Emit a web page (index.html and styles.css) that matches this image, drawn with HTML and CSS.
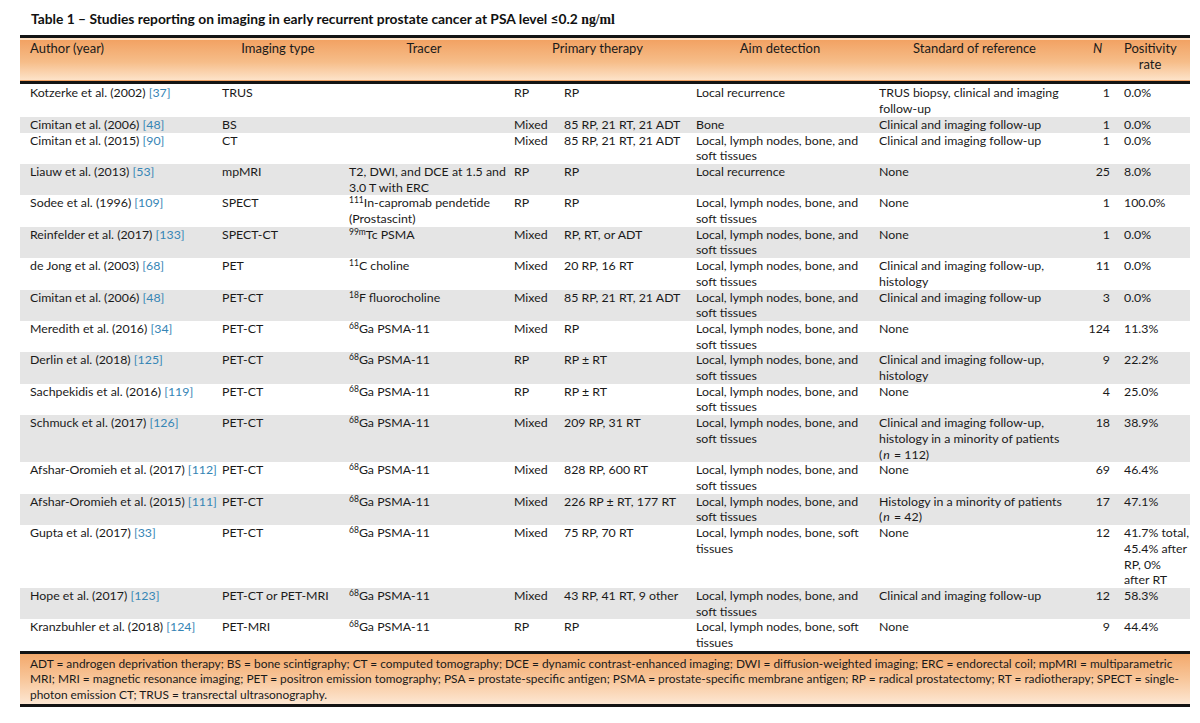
FILE: index.html
```html
<!DOCTYPE html>
<html lang="en">
<head>
<meta charset="utf-8">
<title>Table 1</title>
<link rel="stylesheet" href="styles.css">
</head>
<body>
<div class="page">
  <h1 class="title">Table 1 – Studies reporting on imaging in early recurrent prostate cancer at PSA level ≤0.2 <span class="unit">ng/ml</span></h1>
  <table class="data">
    <colgroup>
      <col class="c-author"><col class="c-img"><col class="c-tracer"><col class="c-ptype"><col class="c-pdet"><col class="c-aim"><col class="c-std"><col class="c-n"><col class="c-pos">
    </colgroup>
    <thead>
      <tr>
        <th class="left">Author (year)</th>
        <th>Imaging type</th>
        <th>Tracer</th>
        <th colspan="2">Primary therapy</th>
        <th>Aim detection</th>
        <th>Standard of reference</th>
        <th class="num"><i>N</i></th>
        <th class="pos">Positivity rate</th>
      </tr>
    </thead>
    <tbody>
      <tr><td>Kotzerke et al. (2002) <a class="ref">[37]</a></td><td>TRUS</td><td class="tr"></td><td>RP</td><td>RP</td><td>Local recurrence</td><td>TRUS biopsy, clinical and imaging follow-up</td><td class="num">1</td><td>0.0%</td></tr>
      <tr><td>Cimitan et al. (2006) <a class="ref">[48]</a></td><td>BS</td><td class="tr"></td><td>Mixed</td><td>85 RP, 21 RT, 21 ADT</td><td>Bone</td><td>Clinical and imaging follow-up</td><td class="num">1</td><td>0.0%</td></tr>
      <tr><td>Cimitan et al. (2015) <a class="ref">[90]</a></td><td>CT</td><td class="tr"></td><td>Mixed</td><td>85 RP, 21 RT, 21 ADT</td><td>Local, lymph nodes, bone, and soft tissues</td><td>Clinical and imaging follow-up</td><td class="num">1</td><td>0.0%</td></tr>
      <tr><td>Liauw et al. (2013) <a class="ref">[53]</a></td><td>mpMRI</td><td class="tr">T2, DWI, and DCE at 1.5 and 3.0 T with ERC</td><td>RP</td><td>RP</td><td>Local recurrence</td><td>None</td><td class="num">25</td><td>8.0%</td></tr>
      <tr><td>Sodee et al. (1996) <a class="ref">[109]</a></td><td>SPECT</td><td class="tr"><sup>111</sup>In-capromab pendetide (Prostascint)</td><td>RP</td><td>RP</td><td>Local, lymph nodes, bone, and soft tissues</td><td>None</td><td class="num">1</td><td>100.0%</td></tr>
      <tr><td>Reinfelder et al. (2017) <a class="ref">[133]</a></td><td>SPECT-CT</td><td class="tr"><sup>99m</sup>Tc PSMA</td><td>Mixed</td><td>RP, RT, or ADT</td><td>Local, lymph nodes, bone, and soft tissues</td><td>None</td><td class="num">1</td><td>0.0%</td></tr>
      <tr><td>de Jong et al. (2003) <a class="ref">[68]</a></td><td>PET</td><td class="tr"><sup>11</sup>C choline</td><td>Mixed</td><td>20 RP, 16 RT</td><td>Local, lymph nodes, bone, and soft tissues</td><td>Clinical and imaging follow-up, histology</td><td class="num">11</td><td>0.0%</td></tr>
      <tr><td>Cimitan et al. (2006) <a class="ref">[48]</a></td><td>PET-CT</td><td class="tr"><sup>18</sup>F fluorocholine</td><td>Mixed</td><td>85 RP, 21 RT, 21 ADT</td><td>Local, lymph nodes, bone, and soft tissues</td><td>Clinical and imaging follow-up</td><td class="num">3</td><td>0.0%</td></tr>
      <tr><td>Meredith et al. (2016) <a class="ref">[34]</a></td><td>PET-CT</td><td class="tr"><sup>68</sup>Ga PSMA-11</td><td>Mixed</td><td>RP</td><td>Local, lymph nodes, bone, and soft tissues</td><td>None</td><td class="num">124</td><td>11.3%</td></tr>
      <tr><td>Derlin et al. (2018) <a class="ref">[125]</a></td><td>PET-CT</td><td class="tr"><sup>68</sup>Ga PSMA-11</td><td>RP</td><td>RP ± RT</td><td>Local, lymph nodes, bone, and soft tissues</td><td>Clinical and imaging follow-up, histology</td><td class="num">9</td><td>22.2%</td></tr>
      <tr><td>Sachpekidis et al. (2016) <a class="ref">[119]</a></td><td>PET-CT</td><td class="tr"><sup>68</sup>Ga PSMA-11</td><td>RP</td><td>RP ± RT</td><td>Local, lymph nodes, bone, and soft tissues</td><td>None</td><td class="num">4</td><td>25.0%</td></tr>
      <tr><td>Schmuck et al. (2017) <a class="ref">[126]</a></td><td>PET-CT</td><td class="tr"><sup>68</sup>Ga PSMA-11</td><td>Mixed</td><td>209 RP, 31 RT</td><td>Local, lymph nodes, bone, and soft tissues</td><td>Clinical and imaging follow-up, histology in a minority of patients <span class="nw">(<i class="it">n</i> = 112)</span></td><td class="num">18</td><td>38.9%</td></tr>
      <tr><td>Afshar-Oromieh et al. (2017) <a class="ref">[112]</a></td><td>PET-CT</td><td class="tr"><sup>68</sup>Ga PSMA-11</td><td>Mixed</td><td>828 RP, 600 RT</td><td>Local, lymph nodes, bone, and soft tissues</td><td>None</td><td class="num">69</td><td>46.4%</td></tr>
      <tr><td>Afshar-Oromieh et al. (2015) <a class="ref">[111]</a></td><td>PET-CT</td><td class="tr"><sup>68</sup>Ga PSMA-11</td><td>Mixed</td><td>226 RP ± RT, 177 RT</td><td>Local, lymph nodes, bone, and soft tissues</td><td>Histology in a minority of patients <span class="nw">(<i class="it">n</i> = 42)</span></td><td class="num">17</td><td>47.1%</td></tr>
      <tr><td>Gupta et al. (2017) <a class="ref">[33]</a></td><td>PET-CT</td><td class="tr"><sup>68</sup>Ga PSMA-11</td><td>Mixed</td><td>75 RP, 70 RT</td><td>Local, lymph nodes, bone, soft tissues</td><td>None</td><td class="num">12</td><td class="multi">41.7% total,<br>45.4% after<br>RP, 0%<br>after RT</td></tr>
      <tr><td>Hope et al. (2017) <a class="ref">[123]</a></td><td>PET-CT or PET-MRI</td><td class="tr"><sup>68</sup>Ga PSMA-11</td><td>Mixed</td><td>43 RP, 41 RT, 9 other</td><td>Local, lymph nodes, bone, and soft tissues</td><td>Clinical and imaging follow-up</td><td class="num">12</td><td>58.3%</td></tr>
      <tr><td>Kranzbuhler et al. (2018) <a class="ref">[124]</a></td><td>PET-MRI</td><td class="tr"><sup>68</sup>Ga PSMA-11</td><td>RP</td><td>RP</td><td>Local, lymph nodes, bone, soft tissues</td><td>None</td><td class="num">9</td><td>44.4%</td></tr>
    </tbody>
  </table>
  <div class="notes">ADT = androgen deprivation therapy; BS = bone scintigraphy; CT = computed tomography; DCE = dynamic contrast-enhanced imaging; DWI = diffusion-weighted imaging; ERC = endorectal coil; mpMRI = multiparametric<br>MRI; MRI = magnetic resonance imaging; PET = positron emission tomography; PSA = prostate-specific antigen; PSMA = prostate-specific membrane antigen; RP = radical prostatectomy; RT = radiotherapy; SPECT = single-<br>photon emission CT; TRUS = transrectal ultrasonography.</div>
</div>
</body>
</html>
```
FILE: styles.css
```css
html, body {
  margin: 0;
  padding: 0;
  background: #ffffff;
}
body {
  font-family: Lato, "Liberation Sans", Arial, sans-serif;
  color: #1a1a1a;
}
.page {
  padding: 11px 10px 0 20px;
}
.title {
  font-size: 13.8px;
  font-weight: bold;
  line-height: 16px;
  margin: 0 0 7px 11px;
  color: #111;
}
.title .unit {
  font-family: "Liberation Serif", serif;
}
.data {
  width: 1170px;
  border-collapse: collapse;
  table-layout: fixed;
  font-size: 12.35px;
  line-height: 15.7px;
}
.c-author { width: 202px; }
.c-img { width: 127px; }
.c-tracer { width: 165px; }
.c-ptype { width: 50px; }
.c-pdet { width: 132px; }
.c-aim { width: 183px; }
.c-std { width: 206px; }
.c-n { width: 39px; }
.c-pos { width: 66px; }

.data thead tr {
  background: linear-gradient(to bottom, #f2a263 0%, #f6bd89 55%, #fde3c9 100%);
  border-top: 3px solid #141414;
  border-bottom: 3px solid #141414;
}
.data th {
  font-weight: normal;
  font-size: 13px;
  text-align: center;
  vertical-align: top;
  padding: 3px 15px 9px 0;
  height: 31px;
}
.data th.left {
  text-align: left;
  padding-left: 10px;
}
.data th.num {
  padding-right: 14px;
}
.data th.pos {
  padding-right: 14px;
  padding-left: 0;
}
.data tbody tr:first-child td {
  padding-top: 1px;
}
.data td {
  vertical-align: top;
  padding: 0 15px 0 0;
}
.data td:first-child {
  padding-left: 10px;
  padding-right: 2px;
}
.data td.tr {
  padding-right: 5px;
}
.data td:last-child {
  padding-right: 0;
}
.data td.multi {
  white-space: nowrap;
}
.data td.num {
  text-align: right;
  padding-right: 14px;
}
.data tbody tr:nth-child(even) {
  background: #e5e5e5;
}
.nw {
  white-space: nowrap;
}
.it {
  display: inline-block;
  padding: 0 1px;
}
.ref {
  color: #3685b5;
}
sup {
  font-size: 8.5px;
  line-height: 0;
  vertical-align: 4px;
}
.notes {
  width: 1150px;
  font-size: 11.9px;
  line-height: 15.7px;
  white-space: nowrap;
  padding: 2px 10px 1px 10px;
  border-top: 3px solid #141414;
  border-bottom: 3px solid #141414;
  background: linear-gradient(to bottom, #f3a96c 0%, #f8c69a 50%, #fde7d3 100%);
}
```
